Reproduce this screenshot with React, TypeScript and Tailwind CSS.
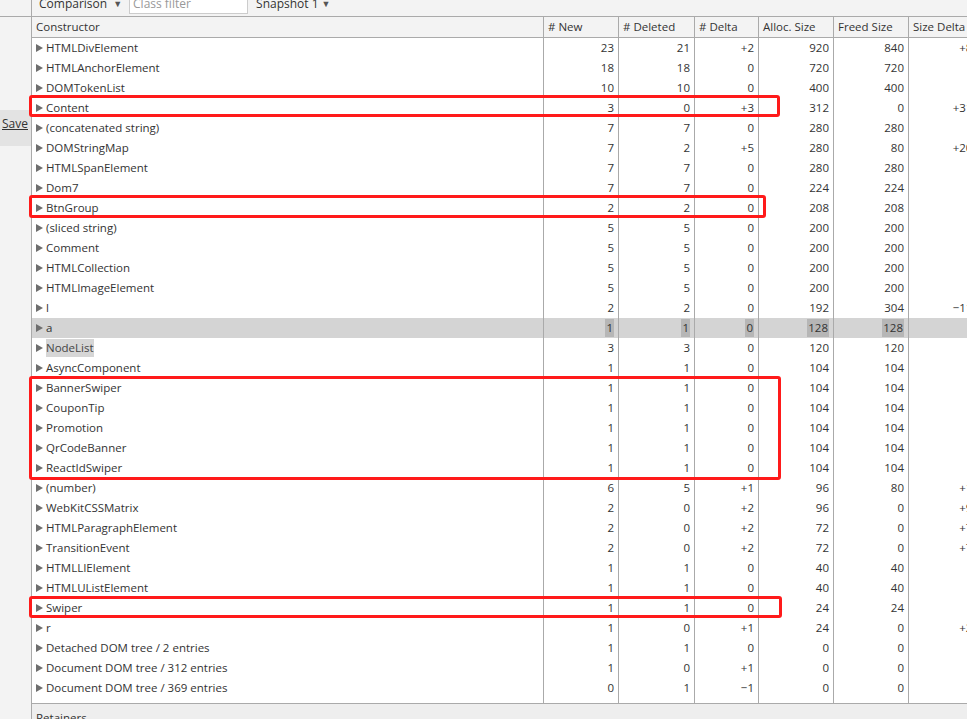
const rows: [string, number, number, number, number][] = [
  ['HTMLDivElement', 23, 21, 920, 840],
  ['HTMLAnchorElement', 18, 18, 720, 720],
  ['DOMTokenList', 10, 10, 400, 400],
  ['Content', 3, 0, 312, 0],
  ['(concatenated string)', 7, 7, 280, 280],
  ['DOMStringMap', 7, 2, 280, 80],
  ['HTMLSpanElement', 7, 7, 280, 280],
  ['Dom7', 7, 7, 224, 224],
  ['BtnGroup', 2, 2, 208, 208],
  ['(sliced string)', 5, 5, 200, 200],
  ['Comment', 5, 5, 200, 200],
  ['HTMLCollection', 5, 5, 200, 200],
  ['HTMLImageElement', 5, 5, 200, 200],
  ['l', 2, 2, 192, 304],
  ['a', 1, 1, 128, 128],
  ['NodeList', 3, 3, 120, 120],
  ['AsyncComponent', 1, 1, 104, 104],
  ['BannerSwiper', 1, 1, 104, 104],
  ['CouponTip', 1, 1, 104, 104],
  ['Promotion', 1, 1, 104, 104],
  ['QrCodeBanner', 1, 1, 104, 104],
  ['ReactIdSwiper', 1, 1, 104, 104],
  ['(number)', 6, 5, 96, 80],
  ['WebKitCSSMatrix', 2, 0, 96, 0],
  ['HTMLParagraphElement', 2, 0, 72, 0],
  ['TransitionEvent', 2, 0, 72, 0],
  ['HTMLLIElement', 1, 1, 40, 40],
  ['HTMLUListElement', 1, 1, 40, 40],
  ['Swiper', 1, 1, 24, 24],
  ['r', 1, 0, 24, 0],
  ['Detached DOM tree / 2 entries', 1, 1, 0, 0],
  ['Document DOM tree / 312 entries', 1, 0, 0, 0],
  ['Document DOM tree / 369 entries', 0, 1, 0, 0],
]

const signed = (n: number) => (n > 0 ? `+${n}` : n < 0 ? `\u2212${-n}` : '0')

const cols = [
  'w-[512px]',
  'w-[75px]',
  'w-[76px]',
  'w-[64px]',
  'w-[75px]',
  'w-[75px]',
  'w-[75px]',
]

function Triangle() {
  return (
    <svg width="7" height="8" viewBox="0 0 7 8" className="mr-[3px] shrink-0">
      <path d="M0 0 L7 4 L0 8 Z" fill="#6e6e6e" />
    </svg>
  )
}

function Row({ data }: { data: [string, number, number, number, number] }) {
  const [name, added, deleted, alloc, freed] = data
  const hl = name === 'a'
  const values = [
    String(added),
    String(deleted),
    signed(added - deleted),
    String(alloc),
    String(freed),
  ]

  return (
    <div className={`flex h-[20px] ${hl ? 'bg-[#d4d4d4]' : ''}`}>
      <div className={`${cols[0]} flex shrink-0 items-center border-r border-[#aaa] pl-[4px]`}>
        <Triangle />
        <span className={name === 'NodeList' ? 'bg-[#d6d6d6] text-[#444]' : ''}>{name}</span>
      </div>
      {values.map((v, i) => (
        <div
          key={i}
          className={`${cols[i + 1]} flex shrink-0 items-center justify-end border-r border-[#aaa] pr-[4px]`}
        >
          <span className={hl ? 'bg-[#b6b6b6] px-px' : ''}>{v}</span>
        </div>
      ))}
      <div className={`${cols[6]} flex shrink-0 items-center justify-end border-r border-[#aaa] pr-[4px]`}>
        {alloc - freed !== 0 && <span>{signed(alloc - freed)}</span>}
      </div>
    </div>
  )
}

const headers = ['Constructor', '# New', '# Deleted', '# Delta', 'Alloc. Size', 'Freed Size', 'Size Delta']

export default function App() {
  return (
    <div
      className="relative flex h-[719px] w-[967px] overflow-hidden bg-white text-[11.5px] text-[#333]"
      style={{ fontFamily: '"Open Sans", "Noto Sans", sans-serif' }}
    >
      {/* sidebar */}
      <div className="flex w-[32px] shrink-0 flex-col border-r border-[#aaa] bg-[#f3f3f3]">
        <div className="h-[17px] border-b border-[#aaa]" />
        <div className="mt-[93px] h-[36px] bg-[#e3e3e3] pl-[2px] pt-[5px] text-[12px]">
          <span className="underline">Save</span>
        </div>
      </div>

      <div className="flex min-w-0 flex-1 flex-col">
        {/* toolbar */}
        <div className="h-[17px] shrink-0 overflow-hidden border-b border-[#aaa] bg-[#f3f3f3]">
          <div className="-mt-[8px] flex h-[24px] items-center whitespace-nowrap pl-[7px] text-[12px] text-[#333]">
            <span>Comparison</span>
            <span className="ml-[6px] text-[9px] text-[#555]">▼</span>
            <div className="ml-[7px] flex h-[20px] w-[119px] items-center border border-[#ccc] bg-white pl-[3px] text-[#999]">
              Class filter
            </div>
            <span className="ml-[8px]">Snapshot 1</span>
            <span className="ml-[3px] text-[9px] text-[#555]">▼</span>
          </div>
        </div>

        {/* header */}
        <div className="flex h-[21px] w-[1000px] shrink-0 border-b border-[#aaa] bg-[#f3f3f3]">
          {headers.map((h, i) => (
            <div
              key={h}
              className={`${cols[i]} flex shrink-0 items-center whitespace-nowrap border-r border-[#aaa] pb-px pl-[4px]`}
            >
              {h}
            </div>
          ))}
        </div>

        {/* body */}
        <div className="flex w-[1000px] flex-1 flex-col whitespace-nowrap">
          {rows.map((r) => (
            <Row key={r[0]} data={r} />
          ))}
          <div className="flex flex-1">
            {cols.map((c, i) => (
              <div key={i} className={`${c} shrink-0 border-r border-[#aaa]`} />
            ))}
          </div>
        </div>

        {/* retainers */}
        <div className="h-[16px] shrink-0 overflow-hidden border-t border-[#aaa] bg-[#eee]">
          <div className="pl-[4px] pt-[6px] leading-[16px]">Retainers</div>
        </div>
      </div>

      {/* annotation boxes */}
      <div className="absolute left-[29px] top-[95px] h-[22px] w-[751px] rounded-[3px] border-[3px] border-[#ff1a1a]" />
      <div className="absolute left-[29px] top-[195px] h-[23px] w-[737px] rounded-[3px] border-[3px] border-[#ff1a1a]" />
      <div className="absolute left-[29px] top-[376px] h-[104px] w-[752px] rounded-[3px] border-[3px] border-[#ff1a1a]" />
      <div className="absolute left-[29px] top-[596px] h-[22px] w-[753px] rounded-[3px] border-[3px] border-[#ff1a1a]" />
    </div>
  )
}
